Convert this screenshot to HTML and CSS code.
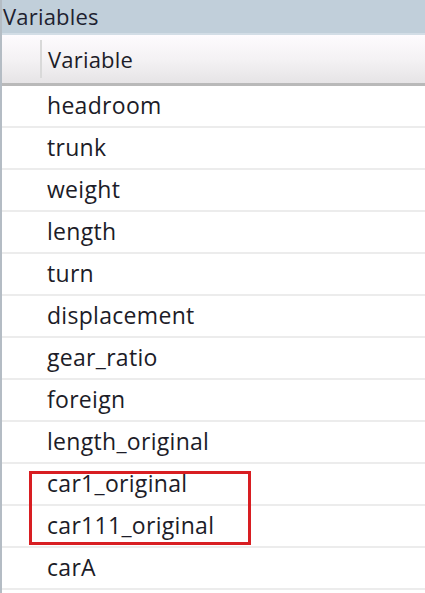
FILE: index.html
```html
<!DOCTYPE html>
<html>
<head>
<meta charset="utf-8">
<link rel="stylesheet" href="styles.css">
</head>
<body>
<div class="panel">
  <div class="title">Variables</div>
  <div class="header">
    <div class="gutter"></div>
    <div class="col">Variable</div>
  </div>
  <div class="rows">
    <div class="row">headroom</div>
    <div class="row">trunk</div>
    <div class="row">weight</div>
    <div class="row">length</div>
    <div class="row">turn</div>
    <div class="row">displacement</div>
    <div class="row">gear_ratio</div>
    <div class="row">foreign</div>
    <div class="row">length_original</div>
    <div class="highlight">
      <div class="row">car1_original</div>
      <div class="row">car111_original</div>
    </div>
    <div class="row">carA</div>
  </div>
</div>
</body>
</html>
```
FILE: styles.css
```css
html, body {
  margin: 0;
  padding: 0;
  background: #ffffff;
}
body {
  width: 425px;
  height: 593px;
  overflow: hidden;
  font-family: "Open Sans", "Noto Sans", sans-serif;
  color: #1c1c28;
}
.panel {
  display: flex;
  flex-direction: column;
  border-left: 2px solid #b4bcc4;
  height: 593px;
  box-sizing: border-box;
}
.title {
  height: 33px;
  background: #c1cfda;
  border-bottom: 2px solid #d3dde6;
  font-size: 22px;
  line-height: 33px;
  padding-left: 1px;
  color: #1e2230;
  letter-spacing: 0.2px;
}
.header {
  height: 48px;
  display: flex;
  align-items: center;
  background: linear-gradient(#fefbfe, #f4f2f4 50%, #e6e4e6);
  border-bottom: 3px solid #b9b9b9;
}
.gutter {
  width: 38px;
  height: 38px;
  border-right: 2px solid #d9d9d9;
}
.col {
  padding-left: 6px;
  font-size: 22px;
  letter-spacing: 0.2px;
}
.rows {
  display: flex;
  flex-direction: column;
}
.row {
  height: 40px;
  border-bottom: 2px solid #ececec;
  padding-left: 45px;
  font-size: 23px;
  line-height: 39px;
  letter-spacing: 0.3px;
}
.highlight {
  position: relative;
}
.highlight::after {
  content: "";
  position: absolute;
  left: 27px;
  top: 7px;
  width: 216px;
  height: 68px;
  border: 3px solid #d81e22;
  pointer-events: none;
}
```
